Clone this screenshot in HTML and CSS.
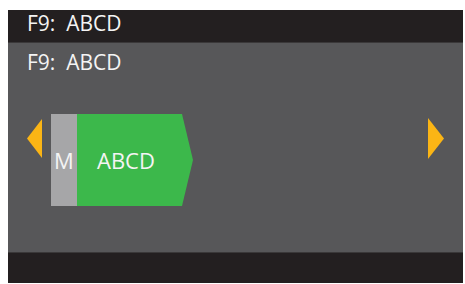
FILE: index.html
```html
<!DOCTYPE html>
<html>
<head>
<meta charset="utf-8">
<link rel="stylesheet" href="styles.css">
</head>
<body>
<div class="screen">
  <div class="topbar"><span class="label">F9:&nbsp; ABCD</span></div>
  <div class="main">
    <div class="subtitle">F9:&nbsp; ABCD</div>
    <div class="row">
      <svg class="arrow arrow-left" width="15" height="39" viewBox="0 0 15 39"><polygon points="15,0 15,39 0,19.5" fill="#fbb515"/></svg>
      <div class="tile">
        <div class="mode">M</div>
        <div class="name">ABCD</div>
      </div>
      <div class="spacer"></div>
      <svg class="arrow arrow-right" width="16" height="41" viewBox="0 0 16 41"><polygon points="0,0 16,20.5 0,41" fill="#fbb515"/></svg>
    </div>
  </div>
  <div class="bottombar"></div>
</div>
</body>
</html>
```

FILE: styles.css
```css
html, body {
  margin: 0;
  padding: 0;
  background: #ffffff;
}
body {
  font-family: "Open Sans", "Noto Sans", sans-serif;
}
.screen {
  margin: 10px 0 0 8px;
  width: 455px;
  height: 273px;
  display: flex;
  flex-direction: column;
  background: #575759;
}
.topbar {
  height: 33px;
  background: #231f20;
  color: #f4f4f4;
  font-size: 21px;
  line-height: 24px;
  padding: 1px 0 0 19px;
  box-sizing: border-box;
  border-bottom: 1px solid #3a3839;
}
.main {
  flex: 1;
  display: flex;
  flex-direction: column;
  padding-top: 7px;
}
.subtitle {
  color: #f4f4f4;
  font-size: 21px;
  line-height: 24px;
  padding-left: 19px;
}
.row {
  display: flex;
  align-items: flex-start;
  margin-top: 40px;
  padding: 0 19px;
}
.arrow {
  display: block;
  flex: none;
}
.arrow-left {
  margin-top: 5px;
  margin-right: 9px;
}
.arrow-right {
  margin-top: 4px;
}
.spacer {
  flex: 1;
}
.tile {
  display: flex;
  height: 92px;
  color: #f4f4f4;
  font-size: 22px;
}
.mode {
  width: 26px;
  background: #a6a6a8;
  display: flex;
  align-items: center;
  justify-content: center;
}
.name {
  width: 116px;
  background: #3cb84b;
  display: flex;
  align-items: center;
  padding-left: 20px;
  box-sizing: border-box;
  clip-path: polygon(0 0, 105px 0, 116px 46px, 105px 92px, 0 92px);
}
.bottombar {
  height: 31px;
  background: #231f20;
  border-top: 1px solid #3a3839;
  box-sizing: border-box;
}
```
